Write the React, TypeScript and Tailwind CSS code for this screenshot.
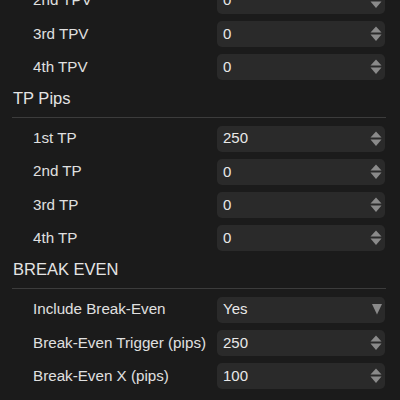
const font = { fontFamily: '"Liberation Sans", Arial, sans-serif' };

type Row = { label: string; value: string; select?: boolean };

function Spinner() {
  return (
    <svg width="12" height="16" viewBox="0 0 12 16" className="shrink-0">
      <polygon points="0.5,6.5 11.5,6.5 6,0.5" fill="#8a8a8a" />
      <polygon points="0.5,8.5 11.5,8.5 6,15" fill="#8a8a8a" />
    </svg>
  );
}

function Caret() {
  return (
    <svg width="10" height="11" viewBox="0 0 10 11" className="shrink-0">
      <polygon points="0,0 10,0 5,10.5" fill="#8a8a8a" />
    </svg>
  );
}

function Field({ label, value, select }: Row) {
  return (
    <div className="flex h-[33.3px] items-center pr-[1px]">
      <div className="w-[205px] shrink-0 pl-[21px] text-[15.2px] text-[#e0e0e0]">{label}</div>
      <div className="flex h-[26px] flex-1 items-center justify-between rounded-[5px] bg-[#2a2a2a] pl-[6px] pr-[3px]">
        <span className="text-[15px] text-[#e8e8e8]">{value}</span>
        {select ? <Caret /> : <Spinner />}
      </div>
    </div>
  );
}

function Section({ title }: { title: string }) {
  return (
    <div className="mb-[4px] border-b border-[#3c3c3c] pt-[4px] pb-[9px]">
      <div className="h-[20px] pl-[1px] text-[16.5px] leading-[20px] text-[#e4e4e4]">{title}</div>
    </div>
  );
}

export default function App() {
  return (
    <div className="h-[400px] w-[400px] overflow-hidden bg-[#1b1b1b]" style={font}>
      <div className="-mt-[16px] pl-3 pr-[14px]">
        <Field label="2nd TPV" value="0" />
        <Field label="3rd TPV" value="0" />
        <Field label="4th TPV" value="0" />
        <Section title="TP Pips" />
        <Field label="1st TP" value="250" />
        <Field label="2nd TP" value="0" />
        <Field label="3rd TP" value="0" />
        <Field label="4th TP" value="0" />
        <Section title="BREAK EVEN" />
        <Field label="Include Break-Even" value="Yes" select />
        <Field label="Break-Even Trigger (pips)" value="250" />
        <Field label="Break-Even X (pips)" value="100" />
      </div>
    </div>
  );
}
